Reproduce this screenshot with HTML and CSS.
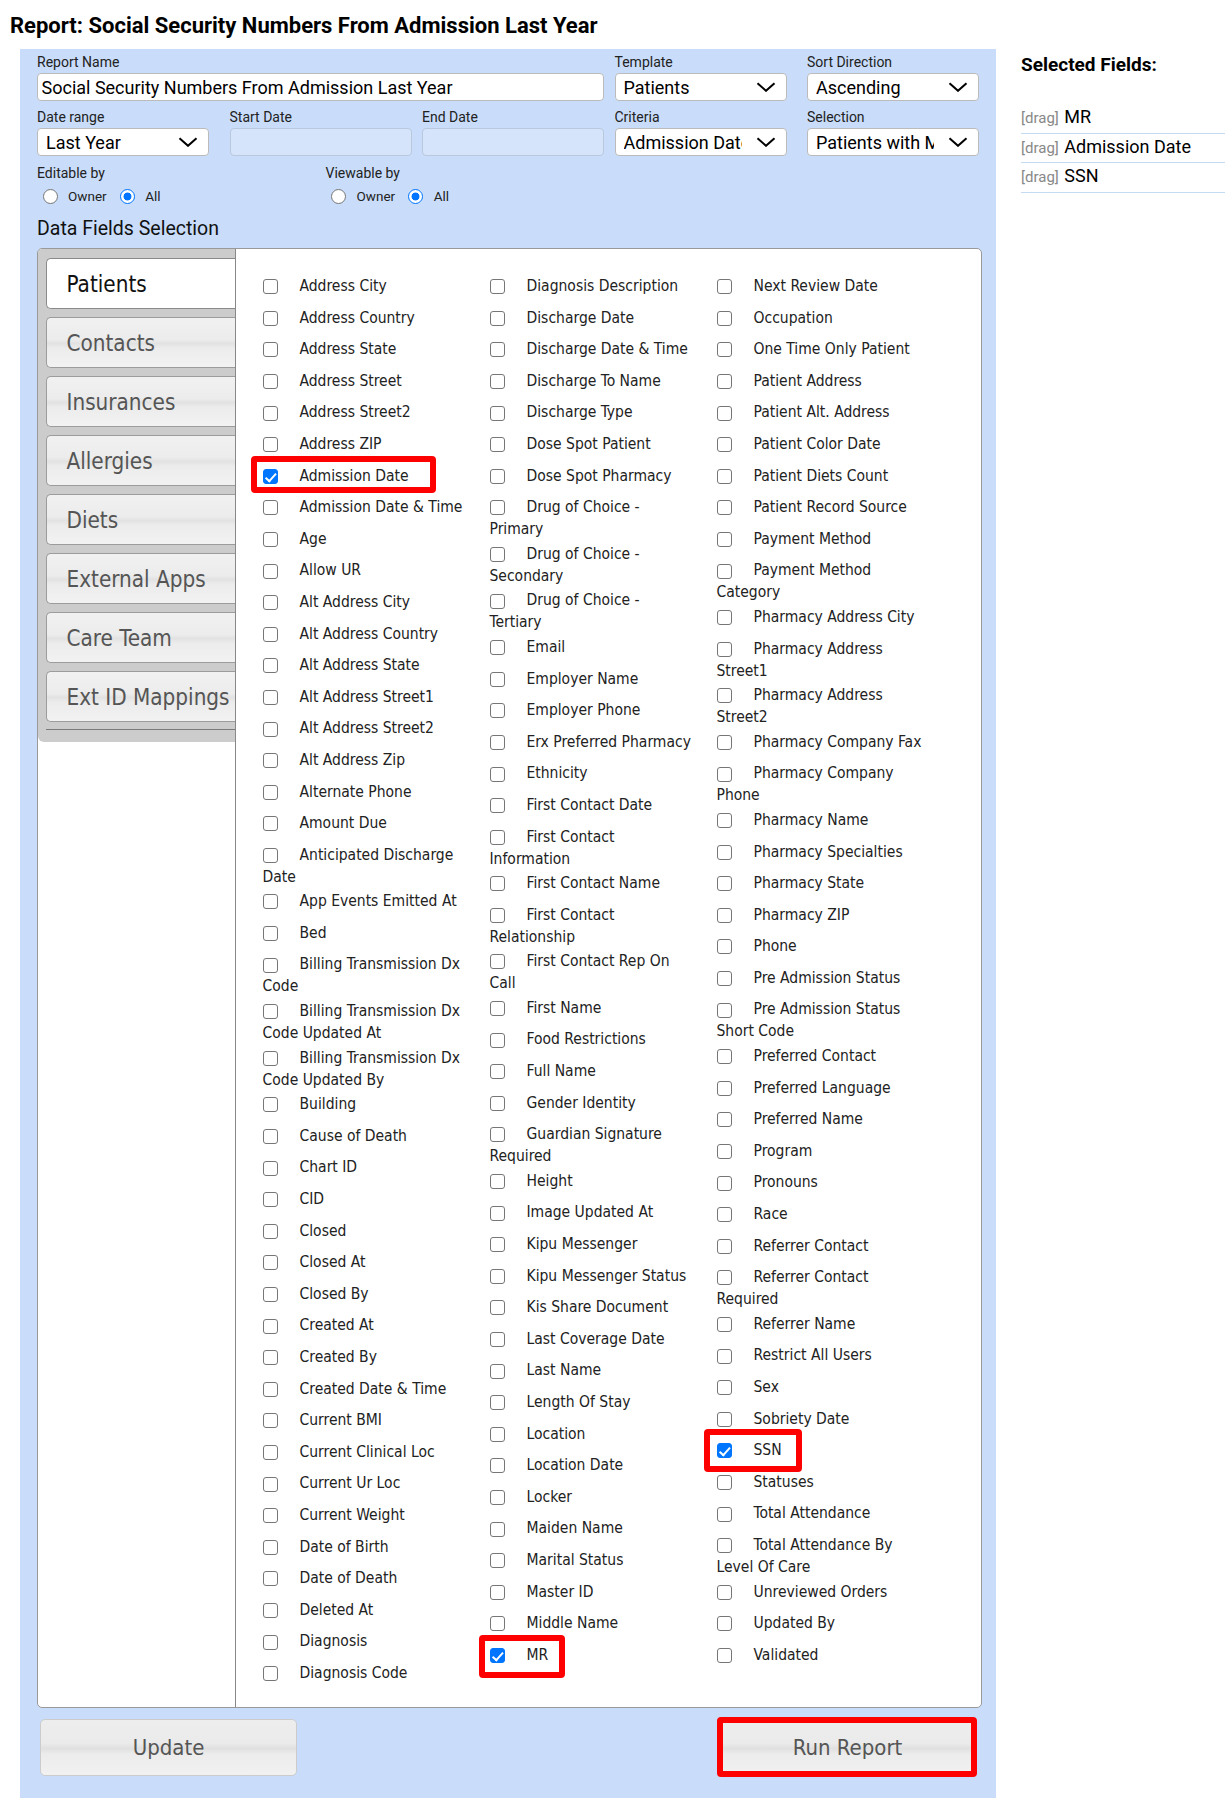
FILE: index.html
```html
<!DOCTYPE html>
<html>
<head>
<meta charset="utf-8">
<title>Report</title>
<link rel="stylesheet" href="styles.css">
</head>
<body>
<h1 class="title">Report: Social Security Numbers From Admission Last Year</h1>
<div class="page">
  <div class="panel">
    <div class="form-grid">
      <div class="field span3">
        <label class="lbl">Report Name</label>
        <input class="txt" type="text" value="Social Security Numbers From Admission Last Year">
      </div>
      <div class="field">
        <label class="lbl">Template</label>
        <div class="sel"><select><option>Patients</option></select><svg class="chev" width="20" height="10" viewBox="0 0 20 10"><path d="M1.5 1.2 L10 8.8 L18.5 1.2" fill="none" stroke="#000" stroke-width="2"/></svg></div>
      </div>
      <div class="field">
        <label class="lbl">Sort Direction</label>
        <div class="sel"><select><option>Ascending</option></select><svg class="chev" width="20" height="10" viewBox="0 0 20 10"><path d="M1.5 1.2 L10 8.8 L18.5 1.2" fill="none" stroke="#000" stroke-width="2"/></svg></div>
      </div>
      <div class="field">
        <label class="lbl">Date range</label>
        <div class="sel"><select><option>Last Year</option></select><svg class="chev" width="20" height="10" viewBox="0 0 20 10"><path d="M1.5 1.2 L10 8.8 L18.5 1.2" fill="none" stroke="#000" stroke-width="2"/></svg></div>
      </div>
      <div class="field">
        <label class="lbl">Start Date</label>
        <input class="txt date" type="text" disabled>
      </div>
      <div class="field">
        <label class="lbl">End Date</label>
        <input class="txt date" type="text" disabled>
      </div>
      <div class="field">
        <label class="lbl">Criteria</label>
        <div class="sel"><select><option>Admission Date</option></select><svg class="chev" width="20" height="10" viewBox="0 0 20 10"><path d="M1.5 1.2 L10 8.8 L18.5 1.2" fill="none" stroke="#000" stroke-width="2"/></svg></div>
      </div>
      <div class="field">
        <label class="lbl">Selection</label>
        <div class="sel"><select><option>Patients with Matching Criteria</option></select><svg class="chev" width="20" height="10" viewBox="0 0 20 10"><path d="M1.5 1.2 L10 8.8 L18.5 1.2" fill="none" stroke="#000" stroke-width="2"/></svg></div>
      </div>
    </div>

    <div class="perm-row">
      <div class="perm">
        <div class="lbl">Editable by</div>
        <div class="radios"><input type="radio" name="ed"><span>Owner</span><input type="radio" name="ed" checked><span>All</span></div>
      </div>
      <div class="perm">
        <div class="lbl">Viewable by</div>
        <div class="radios"><input type="radio" name="vw"><span>Owner</span><input type="radio" name="vw" checked><span>All</span></div>
      </div>
    </div>

    <h2 class="section">Data Fields Selection</h2>

    <div class="fbox">
      <div class="tabs-col">
        <div class="tabs-area">
          <ul class="tabs">
            <li class="tab active">Patients</li>
            <li class="tab">Contacts</li>
            <li class="tab">Insurances</li>
            <li class="tab">Allergies</li>
            <li class="tab">Diets</li>
            <li class="tab">External Apps</li>
            <li class="tab">Care Team</li>
            <li class="tab">Ext ID Mappings</li>
          </ul>
        </div>
      </div>
      <div class="fields">
        <div class="col">
          <label class="item"><input type="checkbox">Address City</label>
          <label class="item"><input type="checkbox">Address Country</label>
          <label class="item"><input type="checkbox">Address State</label>
          <label class="item"><input type="checkbox">Address Street</label>
          <label class="item"><input type="checkbox">Address Street2</label>
          <label class="item"><input type="checkbox">Address ZIP</label>
          <label class="item"><input type="checkbox" checked>Admission Date<span class="mark mark-adm"></span></label>
          <label class="item"><input type="checkbox">Admission Date &amp; Time</label>
          <label class="item"><input type="checkbox">Age</label>
          <label class="item"><input type="checkbox">Allow UR</label>
          <label class="item"><input type="checkbox">Alt Address City</label>
          <label class="item"><input type="checkbox">Alt Address Country</label>
          <label class="item"><input type="checkbox">Alt Address State</label>
          <label class="item"><input type="checkbox">Alt Address Street1</label>
          <label class="item"><input type="checkbox">Alt Address Street2</label>
          <label class="item"><input type="checkbox">Alt Address Zip</label>
          <label class="item"><input type="checkbox">Alternate Phone</label>
          <label class="item"><input type="checkbox">Amount Due</label>
          <label class="item"><input type="checkbox">Anticipated Discharge<br>Date</label>
          <label class="item"><input type="checkbox">App Events Emitted At</label>
          <label class="item"><input type="checkbox">Bed</label>
          <label class="item"><input type="checkbox">Billing Transmission Dx<br>Code</label>
          <label class="item"><input type="checkbox">Billing Transmission Dx<br>Code Updated At</label>
          <label class="item"><input type="checkbox">Billing Transmission Dx<br>Code Updated By</label>
          <label class="item"><input type="checkbox">Building</label>
          <label class="item"><input type="checkbox">Cause of Death</label>
          <label class="item"><input type="checkbox">Chart ID</label>
          <label class="item"><input type="checkbox">CID</label>
          <label class="item"><input type="checkbox">Closed</label>
          <label class="item"><input type="checkbox">Closed At</label>
          <label class="item"><input type="checkbox">Closed By</label>
          <label class="item"><input type="checkbox">Created At</label>
          <label class="item"><input type="checkbox">Created By</label>
          <label class="item"><input type="checkbox">Created Date &amp; Time</label>
          <label class="item"><input type="checkbox">Current BMI</label>
          <label class="item"><input type="checkbox">Current Clinical Loc</label>
          <label class="item"><input type="checkbox">Current Ur Loc</label>
          <label class="item"><input type="checkbox">Current Weight</label>
          <label class="item"><input type="checkbox">Date of Birth</label>
          <label class="item"><input type="checkbox">Date of Death</label>
          <label class="item"><input type="checkbox">Deleted At</label>
          <label class="item"><input type="checkbox">Diagnosis</label>
          <label class="item"><input type="checkbox">Diagnosis Code</label>
        </div>
        <div class="col">
          <label class="item"><input type="checkbox">Diagnosis Description</label>
          <label class="item"><input type="checkbox">Discharge Date</label>
          <label class="item"><input type="checkbox">Discharge Date &amp; Time</label>
          <label class="item"><input type="checkbox">Discharge To Name</label>
          <label class="item"><input type="checkbox">Discharge Type</label>
          <label class="item"><input type="checkbox">Dose Spot Patient</label>
          <label class="item"><input type="checkbox">Dose Spot Pharmacy</label>
          <label class="item"><input type="checkbox">Drug of Choice -<br>Primary</label>
          <label class="item"><input type="checkbox">Drug of Choice -<br>Secondary</label>
          <label class="item"><input type="checkbox">Drug of Choice -<br>Tertiary</label>
          <label class="item"><input type="checkbox">Email</label>
          <label class="item"><input type="checkbox">Employer Name</label>
          <label class="item"><input type="checkbox">Employer Phone</label>
          <label class="item"><input type="checkbox">Erx Preferred Pharmacy</label>
          <label class="item"><input type="checkbox">Ethnicity</label>
          <label class="item"><input type="checkbox">First Contact Date</label>
          <label class="item"><input type="checkbox">First Contact<br>Information</label>
          <label class="item"><input type="checkbox">First Contact Name</label>
          <label class="item"><input type="checkbox">First Contact<br>Relationship</label>
          <label class="item"><input type="checkbox">First Contact Rep On<br>Call</label>
          <label class="item"><input type="checkbox">First Name</label>
          <label class="item"><input type="checkbox">Food Restrictions</label>
          <label class="item"><input type="checkbox">Full Name</label>
          <label class="item"><input type="checkbox">Gender Identity</label>
          <label class="item"><input type="checkbox">Guardian Signature<br>Required</label>
          <label class="item"><input type="checkbox">Height</label>
          <label class="item"><input type="checkbox">Image Updated At</label>
          <label class="item"><input type="checkbox">Kipu Messenger</label>
          <label class="item"><input type="checkbox">Kipu Messenger Status</label>
          <label class="item"><input type="checkbox">Kis Share Document</label>
          <label class="item"><input type="checkbox">Last Coverage Date</label>
          <label class="item"><input type="checkbox">Last Name</label>
          <label class="item"><input type="checkbox">Length Of Stay</label>
          <label class="item"><input type="checkbox">Location</label>
          <label class="item"><input type="checkbox">Location Date</label>
          <label class="item"><input type="checkbox">Locker</label>
          <label class="item"><input type="checkbox">Maiden Name</label>
          <label class="item"><input type="checkbox">Marital Status</label>
          <label class="item"><input type="checkbox">Master ID</label>
          <label class="item"><input type="checkbox">Middle Name</label>
          <label class="item"><input type="checkbox" checked>MR<span class="mark mark-mr"></span></label>
        </div>
        <div class="col">
          <label class="item"><input type="checkbox">Next Review Date</label>
          <label class="item"><input type="checkbox">Occupation</label>
          <label class="item"><input type="checkbox">One Time Only Patient</label>
          <label class="item"><input type="checkbox">Patient Address</label>
          <label class="item"><input type="checkbox">Patient Alt. Address</label>
          <label class="item"><input type="checkbox">Patient Color Date</label>
          <label class="item"><input type="checkbox">Patient Diets Count</label>
          <label class="item"><input type="checkbox">Patient Record Source</label>
          <label class="item"><input type="checkbox">Payment Method</label>
          <label class="item"><input type="checkbox">Payment Method<br>Category</label>
          <label class="item"><input type="checkbox">Pharmacy Address City</label>
          <label class="item"><input type="checkbox">Pharmacy Address<br>Street1</label>
          <label class="item"><input type="checkbox">Pharmacy Address<br>Street2</label>
          <label class="item"><input type="checkbox">Pharmacy Company Fax</label>
          <label class="item"><input type="checkbox">Pharmacy Company<br>Phone</label>
          <label class="item"><input type="checkbox">Pharmacy Name</label>
          <label class="item"><input type="checkbox">Pharmacy Specialties</label>
          <label class="item"><input type="checkbox">Pharmacy State</label>
          <label class="item"><input type="checkbox">Pharmacy ZIP</label>
          <label class="item"><input type="checkbox">Phone</label>
          <label class="item"><input type="checkbox">Pre Admission Status</label>
          <label class="item"><input type="checkbox">Pre Admission Status<br>Short Code</label>
          <label class="item"><input type="checkbox">Preferred Contact</label>
          <label class="item"><input type="checkbox">Preferred Language</label>
          <label class="item"><input type="checkbox">Preferred Name</label>
          <label class="item"><input type="checkbox">Program</label>
          <label class="item"><input type="checkbox">Pronouns</label>
          <label class="item"><input type="checkbox">Race</label>
          <label class="item"><input type="checkbox">Referrer Contact</label>
          <label class="item"><input type="checkbox">Referrer Contact<br>Required</label>
          <label class="item"><input type="checkbox">Referrer Name</label>
          <label class="item"><input type="checkbox">Restrict All Users</label>
          <label class="item"><input type="checkbox">Sex</label>
          <label class="item"><input type="checkbox">Sobriety Date</label>
          <label class="item"><input type="checkbox" checked>SSN<span class="mark mark-ssn"></span></label>
          <label class="item"><input type="checkbox">Statuses</label>
          <label class="item"><input type="checkbox">Total Attendance</label>
          <label class="item"><input type="checkbox">Total Attendance By<br>Level Of Care</label>
          <label class="item"><input type="checkbox">Unreviewed Orders</label>
          <label class="item"><input type="checkbox">Updated By</label>
          <label class="item"><input type="checkbox">Validated</label>
        </div>
      </div>
    </div>

    <div class="actions">
      <button class="btn" type="button">Update</button>
      <button class="btn" type="button">Run Report<span class="mark mark-run"></span></button>
    </div>
  </div>

  <aside class="side">
    <h2 class="side-title">Selected Fields:</h2>
    <div class="sf"><span class="drag">[drag]</span> MR</div>
    <div class="sf"><span class="drag">[drag]</span> Admission Date</div>
    <div class="sf"><span class="drag">[drag]</span> SSN</div>
  </aside>
</div>
</body>
</html>
```

FILE: styles.css
```css
* { box-sizing: border-box; }

body {
  margin: 0;
  width: 1225px;
  font-family: Roboto, "Liberation Sans", sans-serif;
  color: #222;
  background: #fff;
}

.title {
  margin: 13px 0 11px 10px;
  font-size: 22px;
  font-weight: 700;
  line-height: 25px;
  color: #000;
}

.page {
  display: flex;
  align-items: flex-start;
}

.panel {
  margin-left: 20px;
  width: 976px;
  flex: none;
  background: #c9ddfa;
  padding: 5px 14px 22px 17px;
}

/* top form */
.form-grid {
  display: grid;
  grid-template-columns: repeat(5, 182px);
  column-gap: 10.5px;
  row-gap: 8px;
  width: 952px;
}

.span3 { grid-column: span 3; }

.lbl {
  display: block;
  font-size: 14px;
  line-height: 16px;
  margin-bottom: 3px;
  color: #222;
}

.txt {
  display: block;
  width: 100%;
  height: 28px;
  margin: 0;
  border: 1px solid #bbb;
  border-radius: 4px;
  background: #fff;
  font-family: Roboto, "Liberation Sans", sans-serif;
  font-size: 18px;
  padding: 0 3.5px;
  color: #000;
}

.txt.date {
  background: #d5e4fa;
  border-color: #b8c8dd;
}

.sel {
  position: relative;
  width: 172px;
  height: 28px;
}

.sel select {
  -webkit-appearance: none;
  appearance: none;
  display: block;
  width: 100%;
  height: 28px;
  margin: 0;
  border: 1px solid #bbb;
  border-radius: 4px;
  background: #fff;
  font-family: Roboto, "Liberation Sans", sans-serif;
  font-size: 18px;
  padding: 0 44px 0 8px;
  color: #000;
}

.chev {
  position: absolute;
  right: 11px;
  top: 9px;
  pointer-events: none;
}

/* permissions */
.perm-row {
  display: flex;
  margin-top: 9px;
}

.perm { width: 288.5px; }

.perm .lbl { margin-bottom: 0; }

.radios {
  display: flex;
  align-items: center;
  height: 20px;
  margin-top: 5px;
  font-size: 13.5px;
  color: #222;
}

.radios input {
  -webkit-appearance: none;
  appearance: none;
  flex: none;
  width: 15px;
  height: 15px;
  margin: 0 0 0 5.5px;
  border: 1px solid #767676;
  border-radius: 50%;
  background: #fff;
}

.radios input:checked {
  border-color: #0075ff;
  background: radial-gradient(circle at center, #0075ff 0, #0075ff 3.6px, #fff 4.3px);
}

.radios input + span { margin-left: 10.5px; }
.radios span + input { margin-left: 13px; }

.section {
  font-size: 19.5px;
  font-weight: 400;
  line-height: 23px;
  margin: 11px 0 8px;
  color: #111;
}

/* fields box */
.fbox {
  display: flex;
  border: 1px solid #999;
  border-radius: 5px;
  background: #fff;
}

.tabs-col {
  width: 196.5px;
  flex: none;
}

.tabs-area {
  background: #ccc;
  border-radius: 4px 0 0 6px;
  padding: 9px 0 12px 7.5px;
}

.tabs {
  list-style: none;
  margin: 0;
  padding: 0 0 7px;
  border-bottom: 1px solid #7a7a7a;
  display: flex;
  flex-direction: column;
  gap: 8px;
}

.tab {
  height: 51px;
  display: flex;
  align-items: center;
  padding-left: 20px;
  border: 1px solid #9c9c9c;
  border-right: 0;
  border-radius: 5px 0 0 5px;
  font-family: "DejaVu Sans Condensed", "DejaVu Sans", sans-serif;
  font-stretch: condensed;
  font-size: 22.3px;
  color: #555;
  white-space: nowrap;
  overflow: hidden;
  background: linear-gradient(to bottom, #f1f1f1 0%, #ececec 44%, #e2e2e2 52%, #ececec 62%, #f2f2f2 100%);
}

.tab.active {
  background: #fff;
  color: #111;
  border-color: #8a8a8a;
}

.fields {
  flex: 1;
  border-left: 1px solid #888;
  display: flex;
  gap: 17px;
  padding: 22px 0 17px 27px;
}

.col { width: 210px; flex: none; }

.item {
  display: block;
  position: relative;
  font-family: "DejaVu Sans Condensed", "DejaVu Sans", sans-serif;
  font-stretch: condensed;
  font-size: 15.5px;
  line-height: 15px;
  color: #222;
  margin-bottom: 1.6px;
  white-space: nowrap;
}

.item input {
  -webkit-appearance: none;
  appearance: none;
  position: relative;
  top: -6.8px;
  width: 15px;
  height: 15px;
  margin: 15px 22px 0 0;
  vertical-align: -9.8px;
  border: 1px solid #767676;
  border-radius: 3px;
  background: #fff;
}

.item input:checked {
  background: #0075ff;
  border-color: #0075ff;
}

.item input:checked::after {
  content: "";
  position: absolute;
  left: 4.2px;
  top: 1px;
  width: 4px;
  height: 8.5px;
  border: solid #fff;
  border-width: 0 2.3px 2.3px 0;
  transform: rotate(42deg);
}

/* red annotation outlines */
.mark {
  position: absolute;
  border: 6.5px solid #f00;
  border-radius: 4px;
  pointer-events: none;
}

.mark-adm { left: -12px; top: -5px; width: 185px; height: 37px; }
.mark-mr  { left: -11px; top: -5px; width: 86px;  height: 43px; }
.mark-ssn { left: -13px; top: -6px; width: 98px;  height: 43px; }
.mark-run { left: -3px; top: -3px; right: -2px; bottom: -2px; }

/* buttons */
.actions {
  display: flex;
  justify-content: space-between;
  margin-top: 11px;
  padding: 0 6px 0 3px;
}

.btn {
  position: relative;
  width: 257px;
  height: 57px;
  margin: 0;
  padding: 0;
  border: 1px solid #ccc;
  border-radius: 5px;
  background: linear-gradient(to bottom, #ededed 0%, #ebebeb 42%, #e0e0e0 52%, #ececec 62%, #f1f1f1 100%);
  font-family: "DejaVu Sans Condensed", "DejaVu Sans", sans-serif;
  font-stretch: condensed;
  font-size: 22px;
  color: #555;
}

/* side panel */
.side {
  margin-left: 25px;
  flex: 1;
  padding-top: 5px;
}

.side-title {
  font-size: 19px;
  font-weight: 700;
  line-height: 22px;
  margin: 0 0 28px;
  color: #000;
}

.sf {
  height: 29.5px;
  font-size: 18px;
  line-height: 21px;
  padding-top: 2px;
  border-bottom: 1px solid #c6daf4;
  color: #000;
  overflow: hidden;
}

.drag {
  font-size: 15px;
  line-height: 1;
  color: #888;
  margin-right: 1px;
}
```
